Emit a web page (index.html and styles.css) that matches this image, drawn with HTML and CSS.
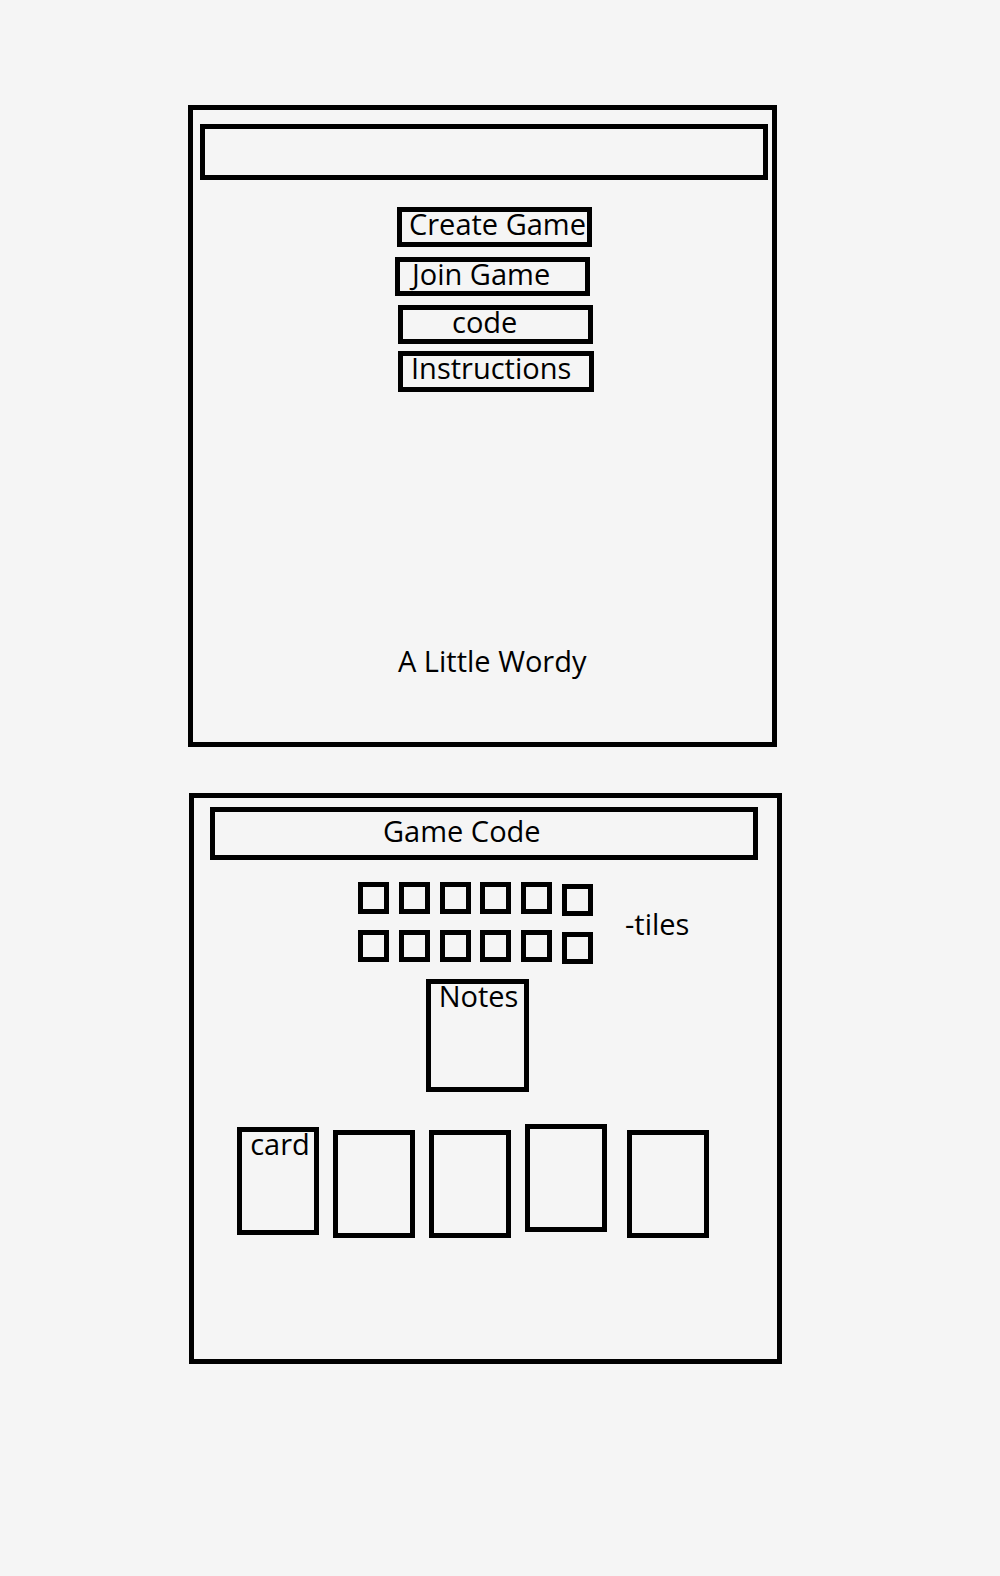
FILE: index.html
```html
<!DOCTYPE html>
<html lang="en">
<head>
<meta charset="utf-8">
<title>A Little Wordy – wireframe</title>
<link rel="stylesheet" href="styles.css">
</head>
<body>
<div class="page">
  <section class="frame frame-home">
    <div class="titlebar"></div>
    <div class="menu">
      <div class="btn btn-create">Create Game</div>
      <div class="btn btn-join">Join Game</div>
      <div class="btn btn-code">code</div>
      <div class="btn btn-instr">Instructions</div>
    </div>
    <div class="brand">A Little Wordy</div>
  </section>

  <section class="frame frame-game">
    <div class="codebar">Game Code</div>
    <div class="tiles-row">
      <div class="tiles">
        <div class="tile"></div>
        <div class="tile"></div>
        <div class="tile"></div>
        <div class="tile"></div>
        <div class="tile"></div>
        <div class="tile tile-low"></div>
        <div class="tile"></div>
        <div class="tile"></div>
        <div class="tile"></div>
        <div class="tile"></div>
        <div class="tile"></div>
        <div class="tile tile-low"></div>
      </div>
      <div class="tiles-label">-tiles</div>
    </div>
    <div class="notes">Notes</div>
    <div class="cards">
      <div class="card card-first">card</div>
      <div class="card"></div>
      <div class="card"></div>
      <div class="card card-raised"></div>
      <div class="card card-last"></div>
    </div>
  </section>
</div>
</body>
</html>
```

FILE: styles.css
```css
html,
body {
  margin: 0;
  background: #f5f5f5;
}

body {
  font-family: "Open Sans", "Noto Sans", sans-serif;
  font-size: 29px;
  line-height: 24px;
  color: #000;
}

.page {
  padding-top: 105px;
  display: flex;
  flex-direction: column;
  align-items: flex-start;
}

.frame {
  box-sizing: border-box;
  border: 5px solid #000;
  display: flex;
  flex-direction: column;
  align-items: flex-start;
}

/* ---------- home screen ---------- */
.frame-home {
  margin-left: 188px;
  width: 589px;
  height: 642px;
}

.titlebar {
  box-sizing: border-box;
  width: 568px;
  height: 56px;
  margin: 14px 0 0 7px;
  border: 5px solid #000;
}

.menu {
  display: flex;
  flex-direction: column;
  align-items: flex-start;
  margin: 27px 0 0 204px;
}

.btn {
  box-sizing: border-box;
  width: 195px;
  border: 5px solid #000;
  padding-left: 6px;
  white-space: nowrap;
}

.btn-create {
  height: 40px;
  padding-left: 7px;
}

.btn-join {
  height: 39px;
  margin-top: 10px;
  margin-left: -2px;
  padding-left: 12px;
}

.btn-code {
  height: 39px;
  margin-top: 9px;
  margin-left: 1px;
  padding-left: 49px;
}

.btn-instr {
  width: 196px;
  height: 41px;
  margin-top: 7px;
  margin-left: 1px;
  padding-left: 8px;
}

.brand {
  margin: auto 0 69px 205px;
  white-space: nowrap;
}

/* ---------- game screen ---------- */
.frame-game {
  margin: 46px 0 0 189px;
  width: 593px;
  height: 571px;
}

.codebar {
  box-sizing: border-box;
  width: 548px;
  height: 53px;
  margin: 9px 0 0 16px;
  border: 5px solid #000;
  padding: 7px 0 0 168px;
  white-space: nowrap;
}

.tiles-row {
  display: flex;
  align-items: flex-start;
  margin: 22px 0 0 164px;
}

.tiles {
  display: grid;
  grid-template-columns: repeat(6, 31px);
  grid-auto-rows: 32px;
  column-gap: 9.8px;
  row-gap: 16px;
}

.tile {
  box-sizing: border-box;
  height: 32px;
  border: 5px solid #000;
  align-self: start;
}

.tile-low {
  margin-top: 2px;
}

.tiles-label {
  margin: 30px 0 0 32px;
  white-space: nowrap;
}

.notes {
  box-sizing: border-box;
  width: 103px;
  height: 113px;
  margin: 17px 0 0 232px;
  border: 5px solid #000;
  padding-left: 2px;
  text-align: center;
}

.cards {
  display: flex;
  align-items: flex-start;
  gap: 14px;
  margin: 32px 0 0 43px;
}

.card {
  box-sizing: border-box;
  width: 82px;
  height: 108px;
  border: 5px solid #000;
  margin-top: 6px;
  text-align: center;
}

.card-first {
  margin-top: 3px;
  padding-left: 4px;
}

.card-raised {
  margin-top: 0;
}

.card-last {
  margin-left: 6px;
}
```
